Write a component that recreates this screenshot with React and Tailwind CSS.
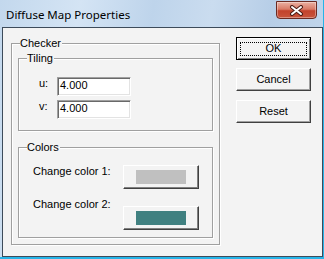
const Group = ({ title, className = "", children }) => (
  <fieldset
    className={`border border-[#a0a0a0] shadow-[1px_1px_0_#fff,inset_1px_1px_0_#fff] ${className}`}
  >
    <legend className="ml-[8px] pr-[1px] leading-[13px] bg-[#f3f3f3]">
      {title}
    </legend>
    {children}
  </fieldset>
);

const Field = ({ value }) => (
  <div className="w-[74px] h-[19px] bg-white border border-t-[#a0a0a0] border-l-[#a0a0a0] border-r-white border-b-white shadow-[inset_1px_1px_0_#696969,inset_-1px_-1px_0_#e3e3e3] pl-[2px] pt-[1px] leading-[13px]">
    {value}
  </div>
);

const ColorButton = ({ color }) => (
  <button className="w-[76px] h-[24px] flex items-center justify-center bg-[#f3f3f3] border border-t-white border-l-white border-r-[#404040] border-b-[#404040] shadow-[inset_-1px_-1px_0_#808080]">
    <span className={`w-[50px] h-[14px] ${color}`}></span>
  </button>
);

const btn =
  "w-[75px] h-[23px] flex items-center justify-center leading-[13px] bg-[#f3f3f3] border border-t-white border-l-white border-r-[#404040] border-b-[#404040] shadow-[inset_-1px_-1px_0_#a0a0a0]";

const App = () => {
  return (
    <div className="w-[324px] h-[259px] flex flex-col bg-[linear-gradient(100deg,#c3d8ed_0%,#d4e4f4_22%,#bed4eb_42%,#cadcef_58%,#b7cee7_74%,#c6d9ed_100%)] border-r border-b-2 border-[#27b4e8]">
      {/* title bar */}
      <div className="h-[27px] flex items-start justify-between">
        <span className="pl-[6px] pt-[7px] text-[11.5px] leading-[16px] text-black font-['Noto_Sans',sans-serif]">
          Diffuse Map Properties
        </span>
        <div className="mt-[1px] mr-[6px] w-[41px] h-[18px] rounded-b-[4px] border border-[#6b2a22] bg-[linear-gradient(180deg,#eab1a3_0%,#d97a66_45%,#c2422c_55%,#c9553c_100%)] shadow-[inset_0_0_0_1px_rgba(255,255,255,0.35)] flex items-center justify-center">
          <svg width="15" height="11" viewBox="0 0 15 11">
            <path d="M3 2 L12 9 M12 2 L3 9" stroke="#4a1b14" strokeWidth="4" strokeLinecap="round" />
            <path d="M3 2 L12 9 M12 2 L3 9" stroke="#fff" strokeWidth="2" strokeLinecap="round" />
          </svg>
        </div>
      </div>

      {/* client area */}
      <div className="flex-1 ml-[2px] border border-[#3d4b5a] bg-[#f3f3f3] flex items-start pt-[9px] pl-[8px] text-[11px] text-black font-['Liberation_Sans',Arial,sans-serif]">
        <Group title="Checker" className="w-[209px] pb-[6px]">
          <Group title="Tiling" className="mx-[6px] mt-[2px]">
            <div className="flex flex-col gap-[4px] pt-[12px] pb-[11px] pl-[20px]">
              <div className="flex items-start">
                <span className="w-[18px] leading-[13px]">u:</span>
                <Field value="4.000" />
              </div>
              <div className="flex items-start">
                <span className="w-[18px] leading-[13px]">v:</span>
                <Field value="4.000" />
              </div>
            </div>
          </Group>

          <Group title="Colors" className="mx-[6px] mt-[10px]">
            <div className="flex pt-[11px] pb-[7px] pl-[14px]">
              <div className="w-[90px] flex flex-col gap-[20px] leading-[13px]">
                <span>Change color 1:</span>
                <span>Change color 2:</span>
              </div>
              <div className="flex flex-col gap-[17px]">
                <ColorButton color="bg-[#c0c0c0]" />
                <ColorButton color="bg-[#408080]" />
              </div>
            </div>
          </Group>
        </Group>

        <div className="ml-[16px] flex flex-col">
          <button className="relative w-[75px] h-[23px] flex items-center justify-center leading-[13px] bg-[#f3f3f3] border border-black shadow-[inset_1px_1px_0_#fff,inset_-1px_-1px_0_#808080]">
            <span className="absolute left-[3px] right-[3px] top-[4px] bottom-[3px] border border-dotted border-black"></span>
            OK
          </button>
          <button className={`${btn} mt-[8px]`}>Cancel</button>
          <button className={`${btn} mt-[9px]`}>Reset</button>
        </div>
      </div>
    </div>
  );
};

export default App;
